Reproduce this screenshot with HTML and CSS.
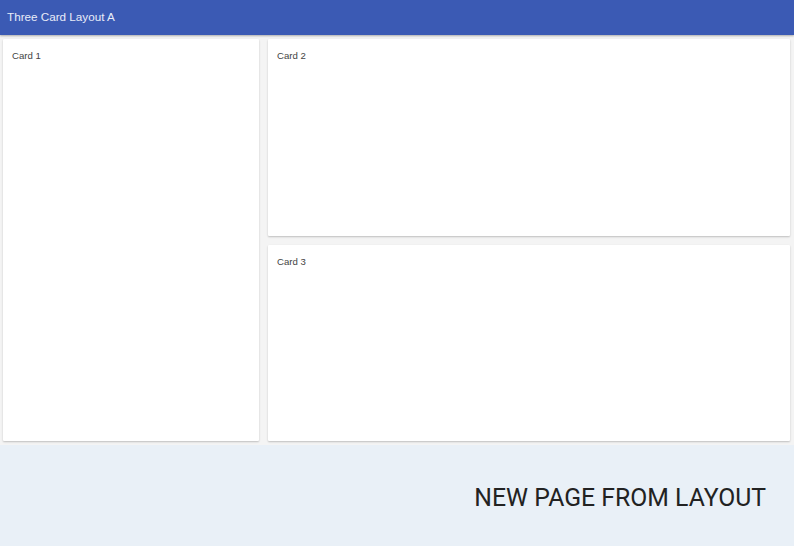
FILE: index.html
```html
<!DOCTYPE html>
<html>
<head>
<meta charset="utf-8">
<link rel="stylesheet" href="styles.css">
</head>
<body>
<div class="preview">
  <header class="appbar">Three Card Layout A</header>
  <main class="grid">
    <section class="card card-tall">Card 1</section>
    <div class="col">
      <section class="card">Card 2</section>
      <section class="card">Card 3</section>
    </div>
  </main>
</div>
<footer class="caption"><span class="caption-text">NEW PAGE FROM LAYOUT</span></footer>
</body>
</html>
```
FILE: styles.css
```css
html, body {
  margin: 0;
  padding: 0;
  width: 794px;
  height: 546px;
  overflow: hidden;
  font-family: "Liberation Sans", Arial, sans-serif;
}
.preview {
  height: 445px;
  background: #f4f4f4;
  display: flex;
  flex-direction: column;
}
.appbar {
  height: 35px;
  flex: none;
  background: #3b5ab4;
  color: #e8ecf8;
  font-size: 11.7px;
  line-height: 34px;
  padding-left: 7px;
  box-shadow: 0 1px 2px rgba(0,0,0,0.3);
  position: relative;
  z-index: 1;
}
.grid {
  flex: 1;
  display: flex;
  gap: 9px;
  padding: 4px 4px 4px 3px;
}
.card {
  background: #fff;
  box-shadow: 0 1px 2px rgba(0,0,0,0.22);
  border-radius: 1px;
  font-size: 9.6px;
  color: #444;
  padding: 11px 9px;
  box-sizing: border-box;
  flex: 1;
}
.card-tall {
  flex: none;
  width: 256px;
}
.col {
  flex: 1;
  display: flex;
  flex-direction: column;
  gap: 9px;
}
.caption {
  height: 101px;
  background: #e9f0f7;
  box-sizing: border-box;
  display: flex;
  justify-content: flex-end;
  padding: 37px 28px 0 0;
  font-family: Roboto, sans-serif;
  font-size: 26.5px;
  line-height: 30px;
  color: #222;
}
.caption-text {
  display: inline-block;
  transform: scaleX(0.935);
  transform-origin: right center;
}
```
